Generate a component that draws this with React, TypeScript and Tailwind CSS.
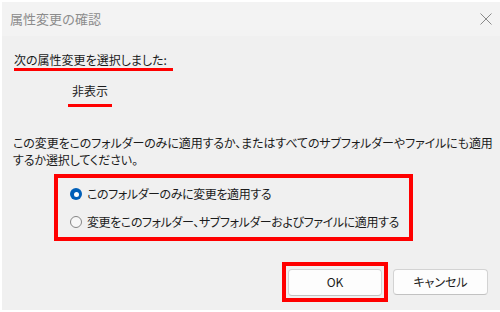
const FONT = "font-['Noto_Sans_CJK_JP','Noto_Sans',sans-serif] [font-feature-settings:'palt']"

function Radio({ checked, label }: { checked: boolean; label: string }) {
  return (
    <div className="flex items-center h-[20px] whitespace-nowrap">
      {checked ? (
        <span className="shrink-0 w-[12px] h-[12px] rounded-full bg-[#005fb8] flex items-center justify-center">
          <span className="w-[5px] h-[5px] rounded-full bg-white" />
        </span>
      ) : (
        <span className="shrink-0 w-[12px] h-[12px] rounded-full border border-[#858585] bg-[#f7f7f7]" />
      )}
      <span className="ml-[5px] text-[12px] leading-[16px] tracking-[-0.4px] text-[#1b1b1b]">{label}</span>
    </div>
  )
}

export default function App() {
  return (
    <div className={`w-[500px] h-[312px] bg-white pt-[2px] pl-[2px] pb-[2px] ${FONT}`}>
      <div className="h-full flex flex-col">
        <div className="shrink-0 h-[34px] bg-[#f3f3f3] flex items-center justify-between pl-[8px] pr-[8px]">
          <span className="text-[13px] leading-[16px] text-[#8c8c8c] [font-feature-settings:normal]">属性変更の確認</span>
          <svg width="12" height="12" viewBox="0 0 12 12">
            <path d="M0.5 0.5 L11.5 11.5 M11.5 0.5 L0.5 11.5" stroke="#8a8a8a" strokeWidth="1" />
          </svg>
        </div>

        <div className="flex-1 bg-[#f0f0f0] flex flex-col text-[#1b1b1b]">
          <div className="mt-[16px] ml-[12px] self-start border-b-[3px] border-[#ff0000] pr-[6px]">
            <p className="text-[12px] leading-[16px]">次の属性変更を選択しました:</p>
          </div>

          <div className="mt-[12px] ml-[66px] self-start border-b-[3px] border-[#ff0000] px-[4px] pb-[5px]">
            <p className="text-[12px] leading-[16px]">非表示</p>
          </div>

          <div className="mt-[27px] ml-[11px] text-[12px] leading-[17px] tracking-[-0.1px] whitespace-nowrap">
            <p>この変更をこのフォルダーのみに適用するか、またはすべてのサブフォルダーやファイルにも適用</p>
            <p>するか選択してください。</p>
          </div>

          <div className="mt-[6px] ml-[52px] w-[359px] h-[67px] border-4 border-[#ff0000] pl-[12px] pt-[6px] flex flex-col gap-[8px]">
            <Radio checked label="このフォルダーのみに変更を適用する" />
            <Radio checked={false} label="変更をこのフォルダー、サブフォルダーおよびファイルに適用する" />
          </div>

          <div className="mt-[21px] flex items-center justify-end pr-[12px] gap-[5px]">
            <div className="border-4 border-[#ff0000] p-[2px]">
              <button className="w-[94px] h-[27px] rounded-[4px] bg-[#fdfdfd] border border-[#d3d3d3] border-b-[#c2c2c2] text-[12px] text-[#1b1b1b]">
                OK
              </button>
            </div>
            <button className="w-[95px] h-[26px] rounded-[4px] bg-[#fdfdfd] border border-[#d3d3d3] border-b-[#c2c2c2] text-[12px] text-[#1b1b1b]">
              キャンセル
            </button>
          </div>
        </div>
      </div>
    </div>
  )
}
